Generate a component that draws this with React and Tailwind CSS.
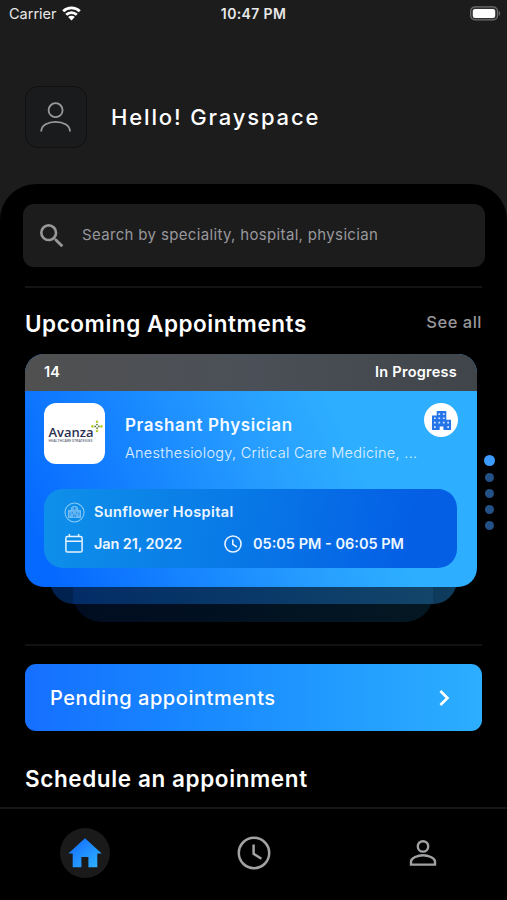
import React from "react";
import { MdSearch, MdChevronRight } from "react-icons/md";

function StatusBar() {
  return (
    <div className="grid h-7 grid-cols-3 items-center pl-[9px] pr-[6px] text-[15px] leading-none text-[#e8e8e8]">
      <div className="flex items-center gap-[5px]">
        <span className="text-[14.5px]">Carrier</span>
        <svg width="19" height="15" viewBox="0 0 19 15" fill="none" stroke="#fff" strokeWidth="2.7" className="-mt-[2px]">
          <path d="M1.2 5.3a12 12 0 0 1 16.6 0" />
          <path d="M4.2 8.7a7.6 7.6 0 0 1 10.6 0" />
          <path d="M6.2 11.1a4.6 4.6 0 0 1 6.6 0L9.5 14.6z" fill="#fff" stroke="none" />
        </svg>
      </div>
      <span className="whitespace-nowrap pr-[3px] text-center text-[14px] font-semibold tracking-[0.35px]">10:47 PM</span>
      <div className="flex justify-end">
        <svg width="31" height="15" viewBox="0 0 31 15" className="-mt-[2px]">
          <rect x="0.6" y="0.9" width="27" height="13" rx="4.4" fill="#303030" stroke="#6d6d6d" strokeWidth="1.2" />
          <rect x="2.8" y="2.9" width="22.4" height="9" rx="2.2" fill="#fff" />
          <path d="M28.8 5v4.8c1.8-.6 1.8-4.2 0-4.8z" fill="#6d6d6d" />
        </svg>
      </div>
    </div>
  );
}

function Header() {
  return (
    <header className="flex h-[156px] items-start gap-[25px] pl-[25px] pt-[58px]">
      <div className="flex size-[62px] items-center justify-center rounded-[13px] border border-[#111] bg-[#1a1b1c]">
        <svg width="32" height="32" viewBox="0 0 32 32" fill="none" stroke="#97999b" strokeWidth="1.8">
          <circle cx="15.6" cy="9.2" r="7" />
          <path d="M1.2 30.6C1.2 17.6 30 17.6 30 30.6" />
        </svg>
      </div>
      <h1 className="-ml-px mt-[17px] whitespace-nowrap text-[22px] font-medium leading-7 tracking-[1.85px] text-white">Hello! Grayspace</h1>
    </header>
  );
}

function AvanzaLogo() {
  return (
    <div className="flex size-[61px] shrink-0 items-center justify-center rounded-xl bg-white">
      <svg width="57" height="32" viewBox="0 0 57 32">
        <text x="2.5" y="18.8" textLength="45" lengthAdjust="spacingAndGlyphs" fontFamily="Open Sans, sans-serif" fontSize="12.5" fontWeight="600" fill="#2c3050">Avanza</text>
        <text x="2.5" y="23.6" textLength="44" lengthAdjust="spacingAndGlyphs" fontFamily="Open Sans, sans-serif" fontSize="3.2" fontWeight="600" fill="#5a5d75">HEALTHCARE STRATEGIES</text>
        <g fill="#b7cf33">
          <circle cx="51" cy="3.8" r="1.3" />
          <circle cx="51" cy="13" r="1.3" />
          <circle cx="46.4" cy="8.4" r="1.3" />
          <circle cx="55.4" cy="8.4" r="1.3" />
        </g>
        <g fill="#5a7f35">
          <circle cx="51" cy="6.6" r="0.9" />
          <circle cx="51" cy="10.2" r="0.9" />
          <circle cx="49.2" cy="8.4" r="0.9" />
          <circle cx="52.8" cy="8.4" r="0.9" />
        </g>
      </svg>
    </div>
  );
}

function BuildingIcon() {
  return (
    <svg width="19" height="19" viewBox="0 0 19 19">
      <path d="M0 4.5h4.7V0h9.6v8.8H19V19h-7.6v-3.6H7.7V19H0z" fill="#2575e8" />
      <g fill="#d3e6ff">
        <path d="M6.4 2.2h1.7v1.7H6.4zM10.9 2.2h1.7v1.7h-1.7zM6.4 6.4h1.7v1.7H6.4zM10.9 6.4h1.7v1.7h-1.7zM6.4 10.8h1.7v1.7H6.4zM10.9 10.8h1.7v1.7h-1.7z" />
        <path d="M2 6.4h1.7v1.7H2zM2 10.8h1.7v1.7H2zM2 15.2h1.7v1.7H2zM15.3 10.8H17v1.7h-1.7zM15.3 15.2H17v1.7h-1.7z" />
      </g>
    </svg>
  );
}

function HospitalIcon() {
  return (
    <svg width="21" height="21" viewBox="0 0 21 21" fill="none" stroke="#86c9f7">
      <circle cx="10.5" cy="10.5" r="9.5" strokeWidth="1.1" />
      <path d="M4.5 15.5V8.5h2.8V6a3.4 2.6 0 0 1 6.4 0v2.5h2.8v7z" fill="#5fb3f0" strokeWidth="0.8" />
      <path d="M10.5 4.8v3M9 6.3h3M6 10.5v3M8.3 10v2M12.7 10v2M15 10.5v3M9.5 15.5v-2.3h2v2.3" stroke="#1c86e4" strokeWidth="0.7" />
    </svg>
  );
}

function CalendarIcon() {
  return (
    <svg width="18" height="19" viewBox="0 0 18 19" fill="none" stroke="#e6f3ff" strokeWidth="1.5">
      <rect x="0.9" y="2.6" width="16.2" height="15.4" rx="1.6" />
      <path d="M1 7.2h16M4.4 0v3M13.6 0v3" />
    </svg>
  );
}

function ClockIcon({ size, stroke, width }) {
  return (
    <svg width={size} height={size} viewBox="0 0 34 34" fill="none" stroke={stroke} strokeWidth={width}>
      <circle cx="17" cy="17" r="15.2" />
      <path d="M16.6 8.6v9.2l7.8 4.9" />
    </svg>
  );
}

function AppointmentCard() {
  return (
    <div className="relative mt-[15px] h-[269px]">
      <div className="absolute left-[48px] top-[200px] h-[68px] w-[360px] rounded-b-[28px] bg-linear-to-r from-[#010c20] to-[#041823]" />
      <div className="absolute left-[25px] top-[190px] h-[60px] w-[407px] rounded-b-[24px] bg-linear-to-r from-[#01214f] to-[#0f3c5c]" />
      <div className="absolute left-[48px] top-[190px] h-[60px] w-[360px] bg-linear-to-r from-[#032c66] to-[#13456a]" />

      <article className="relative h-[233px] w-[452px] overflow-hidden rounded-[19px] bg-[linear-gradient(65deg,#0568ff_5%,#269dff_52%,#2daeff_70%)]">
        <div className="flex h-[37px] items-center justify-between bg-linear-to-r from-[#505050] via-[#4b5058] to-[#40454a] pb-px pl-[19px] pr-[20px] text-[14.5px] font-semibold text-white">
          <span>14</span>
          <span className="tracking-[0.25px]">In Progress</span>
        </div>

        <div className="flex pl-[19px] pr-[19px] pt-[12px]">
          <AvanzaLogo />
          <div className="ml-[20px] flex-1 whitespace-nowrap">
            <h3 className="mt-[10px] text-[17px] font-semibold leading-6 tracking-[0.6px] text-[#f4faff]">Prashant Physician</h3>
            <p className="mt-[6px] text-[14.5px] font-light leading-5 tracking-[0.28px] text-[#e0f1ff]">Anesthesiology, Critical Care Medicine, ...</p>
          </div>
          <div className="flex size-[34px] shrink-0 items-center justify-center rounded-full bg-white">
            <BuildingIcon />
          </div>
        </div>

        <div className="ml-[19px] mt-[25px] h-[79px] w-[413px] rounded-[19px] bg-[linear-gradient(100deg,#0e90ea_0%,#0877e6_50%,#045fe5_88%)] pl-[20px] pt-[13px] text-[14.5px] font-semibold text-[#edf7ff]">
          <div className="flex h-[21px] items-center gap-[9px]">
            <HospitalIcon />
            <span className="whitespace-nowrap pb-px tracking-[0.37px]">Sunflower Hospital</span>
          </div>
          <div className="mt-[10px] flex h-[21px] items-center whitespace-nowrap">
            <span className="ml-px"><CalendarIcon /></span>
            <span className="ml-[11px] w-[130px] tracking-[-0.1px]">Jan 21, 2022</span>
            <ClockIcon size={18} stroke="#e6f3ff" width="3" />
            <span className="ml-[11px]">05:05 PM - 06:05 PM</span>
          </div>
        </div>
      </article>

      <div className="absolute left-[459px] top-[101px] flex w-[11px] flex-col items-center gap-[7px]">
        <span className="size-[11px] rounded-full bg-[#3b9bff]" />
        <span className="size-[9px] rounded-full bg-[#235086]" />
        <span className="size-[9px] rounded-full bg-[#235086]" />
        <span className="size-[9px] rounded-full bg-[#235086]" />
        <span className="size-[9px] rounded-full bg-[#235086]" />
      </div>
    </div>
  );
}

function TabBar() {
  return (
    <nav className="grid h-[93px] grid-cols-3 border-t-2 border-[#151515] bg-black pt-[19px]">
      <div className="flex h-[50px] justify-center">
        <div className="flex size-[50px] items-center justify-center rounded-full bg-[#1a1a1a]">
          <svg width="34" height="30" viewBox="0 0 34 30">
            <defs>
              <linearGradient id="home" x1="0" y1="0" x2="1" y2="1">
                <stop offset="0.2" stopColor="#1677ff" />
                <stop offset="0.9" stopColor="#2daeff" />
              </linearGradient>
            </defs>
            <path d="M17 0.3 0.3 15.6h4.4V29.2h8.7V19h7V29.2h8.9V15.6h4.4z" fill="url(#home)" />
          </svg>
        </div>
      </div>
      <div className="flex h-[50px] items-center justify-center">
        <ClockIcon size={34} stroke="#a2a3a5" width="2.5" />
      </div>
      <div className="flex h-[50px] items-center justify-center">
        <svg width="28" height="28" viewBox="0 0 28 28" fill="none" stroke="#a0a1a3" strokeWidth="2.4">
          <circle cx="14" cy="7.4" r="5.2" />
          <path d="M2 25.6v-3.2c0-3.4 7-6.2 12-6.2s12 2.8 12 6.2v3.2z" />
        </svg>
      </div>
    </nav>
  );
}

export default function App() {
  return (
    <div className="flex h-[900px] w-[507px] flex-col overflow-hidden bg-[#1c1c1c] font-['Inter',sans-serif]">
      <StatusBar />
      <Header />
      <main className="flex-1 rounded-t-[36px] bg-black pt-[20px]">
        <div className="ml-[23px] flex h-[63px] w-[462px] items-center rounded-[11px] bg-[#1c1c1c] pl-[13px]">
          <MdSearch className="size-[32px] text-[#98989a]" />
          <span className="ml-[14px] whitespace-nowrap text-[15px] tracking-[0.34px] text-[#98989c]">Search by speciality, hospital, physician</span>
        </div>
        <div className="ml-[25px] w-[457px]">
          <div className="mt-[19px] h-[2px] bg-[#141414]" />
          <div className="mt-[20px] flex h-[31px] items-center justify-between whitespace-nowrap">
            <h2 className="text-[22.5px] font-semibold tracking-[0.55px] text-white">Upcoming Appointments</h2>
            <span className="pb-[3px] text-[16.5px] font-medium tracking-[0.5px] text-[#98989c]">See all</span>
          </div>
          <AppointmentCard />
          <div className="mt-[21px] h-[2px] bg-[#111]" />
          <button className="mt-[18px] flex h-[67px] w-full items-center justify-between rounded-[11px] bg-linear-to-r from-[#166fff] to-[#2daeff] pl-[25px] pr-[22px] text-white">
            <span className="whitespace-nowrap text-[20px] font-medium tracking-[0.55px]">Pending appointments</span>
            <MdChevronRight className="size-[32px]" />
          </button>
          <h2 className="mt-[32px] whitespace-nowrap text-[22.5px] font-semibold leading-8 tracking-[0.6px] text-white">Schedule an appoinment</h2>
        </div>
      </main>
      <TabBar />
    </div>
  );
}
